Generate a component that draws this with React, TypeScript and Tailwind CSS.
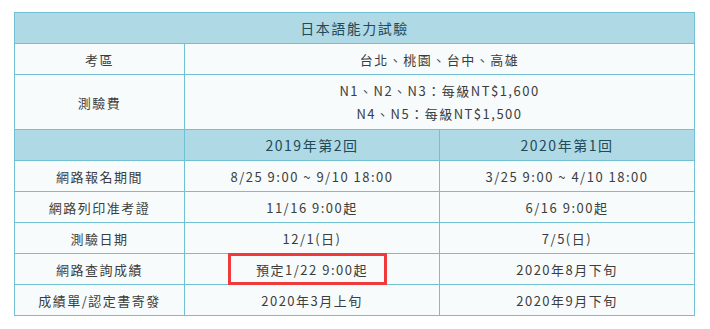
import React from "react";

const rows: [string, string, string][] = [
  ["網路報名期間", "8/25 9:00 ~ 9/10 18:00", "3/25 9:00 ~ 4/10 18:00"],
  ["網路列印准考證", "11/16 9:00起", "6/16 9:00起"],
  ["測驗日期", "12/1(日)", "7/5(日)"],
  ["網路查詢成績", "預定1/22 9:00起", "2020年8月下旬"],
  ["成績單/認定書寄發", "2020年3月上旬", "2020年9月下旬"],
];

export default function App() {
  const td = "border border-[#72c0d4] h-[31px] p-0 text-center align-middle";
  const th = "border border-[#72c0d4] h-[31px] p-0 text-center align-middle bg-[#b0d9e6] text-[#1f4a58] text-[14px] font-normal";
  return (
    <div
      className="w-[710px] h-[329px] bg-white pt-[12px] pl-[14px]"
      style={{ fontFamily: '"Noto Sans CJK TC", "Noto Sans", sans-serif' }}
    >
      <table className="border-collapse w-[680px] table-fixed text-[13px] tracking-[1.5px] text-[#3d3d3d] bg-[#f7fbfc] leading-[23px]">
        <colgroup>
          <col className="w-[170px]" />
          <col className="w-[255px]" />
          <col className="w-[255px]" />
        </colgroup>
        <tbody>
          <tr>
            <th colSpan={3} className={th}>日本語能力試驗</th>
          </tr>
          <tr>
            <td className={td}>考區</td>
            <td colSpan={2} className={td}>台北、桃園、台中、高雄</td>
          </tr>
          <tr>
            <td className={td + " h-[55px]"}>測驗費</td>
            <td colSpan={2} className={td + " h-[55px]"}>
              <div>N1、N2、N3：每級NT$1,600</div>
              <div>N4、N5：每級NT$1,500</div>
            </td>
          </tr>
          <tr>
            <th className={th}></th>
            <th className={th}>2019年第2回</th>
            <th className={th}>2020年第1回</th>
          </tr>
          {rows.map((r, i) => (
            <tr key={i}>
              <td className={td}>{r[0]}</td>
              <td className={td + (i === 3 ? " relative" : "")}>
                {r[1]}
                {i === 3 && (
                  <div className="absolute left-[43px] right-[52px] top-[-1px] bottom-[-1px] border-[3px] border-[#f0393b] pointer-events-none" />
                )}
              </td>
              <td className={td}>{r[2]}</td>
            </tr>
          ))}
        </tbody>
      </table>
    </div>
  );
}
